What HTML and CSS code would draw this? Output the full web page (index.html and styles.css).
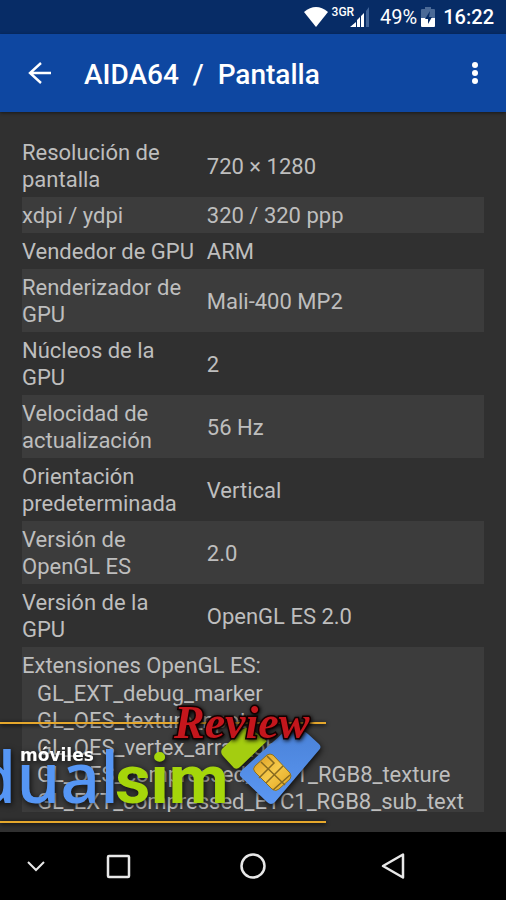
FILE: index.html
```html
<!DOCTYPE html>
<html lang="es">
<head>
    <meta charset="UTF-8">
    <meta name="viewport" content="width=device-width, initial-scale=1">
    <title>AIDA64 / Pantalla</title>
    <link rel="stylesheet" href="styles.css">
</head>
<body>
    <div class="status-bar">
        <svg class="wifi" width="24" height="20" viewBox="0 0 24 20" aria-hidden="true">
            <path d="M0 5Q12-5 24 5L12 20Z" fill="#fff"/>
        </svg>
        <span class="network">3GR</span>
        <svg class="signal" width="20" height="20" viewBox="0 0 20 20" aria-hidden="true">
            <path d="M0 20L6 15V20ZM7 13L10 10V20H7ZM11 9L14 6V20H11Z" fill="#fff"/>
            <path d="M16 4L19 0V20H16Z" fill="#3f6398"/>
        </svg>
        <span class="percent">49%</span>
        <svg class="battery" width="14" height="20" viewBox="0 0 14 20" aria-hidden="true">
            <path d="M4 0H10V2H13Q14 2 14 3V11H0V3Q0 2 1 2H4Z" fill="#4b6a97"/>
            <path d="M0 11H14V19Q14 20 13 20H1Q0 20 0 19Z" fill="#fff"/>
            <path d="M9 4L4 12H7V17L11 10H8Z" fill="#072c66"/>
        </svg>
        <span class="clock">16:22</span>
    </div>

    <header class="app-bar">
        <button class="icon-button" aria-label="Atrás">
            <svg width="24" height="24" viewBox="0 0 24 24">
                <path d="M13 2L2 12L13 22M2 12H23" fill="none" stroke="#fff" stroke-width="2.4"/>
            </svg>
        </button>
        <h1 class="title">AIDA64  /  Pantalla</h1>
        <button class="icon-button" aria-label="Más opciones">
            <svg width="24" height="24" viewBox="0 0 24 24">
                <g fill="#fff">
                    <circle cx="12" cy="4" r="3"/>
                    <circle cx="12" cy="12" r="3"/>
                    <circle cx="12" cy="20" r="3"/>
                </g>
            </svg>
        </button>
    </header>

    <main class="content">
        <div class="scroll">
            <table class="info">
                <tbody>
                    <tr><th scope="row">Resolución de pantalla</th><td>720 × 1280</td></tr>
                    <tr><th scope="row">xdpi / ydpi</th><td>320 / 320 ppp</td></tr>
                    <tr><th scope="row">Vendedor de GPU</th><td>ARM</td></tr>
                    <tr><th scope="row">Renderizador de GPU</th><td>Mali-400 MP2</td></tr>
                    <tr><th scope="row">Núcleos de la GPU</th><td>2</td></tr>
                    <tr><th scope="row">Velocidad de actualización</th><td>56 Hz</td></tr>
                    <tr><th scope="row">Orientación predeterminada</th><td>Vertical</td></tr>
                    <tr><th scope="row">Versión de OpenGL ES</th><td>2.0</td></tr>
                    <tr><th scope="row">Versión de la<br>GPU</th><td>OpenGL ES 2.0</td></tr>
                    <tr>
                        <td colspan="2">
                            Extensiones OpenGL ES:
                            <ul class="extensions">
                                <li>GL_EXT_debug_marker</li>
                                <li>GL_OES_texture_npot</li>
                                <li>GL_OES_vertex_array_object</li>
                                <li>GL_OES_compressed_ETC1_RGB8_texture</li>
                                <li>GL_EXT_compressed_ETC1_RGB8_sub_text</li>
                            </ul>
                        </td>
                    </tr>
                </tbody>
            </table>
        </div>

        <!-- site watermark -->
        <svg class="watermark" width="340" height="140" viewBox="0 0 340 140" role="img" aria-label="móviles dualsim Review">
            <defs>
                <linearGradient id="gold" x1="0" y1="0" x2="1" y2="1">
                    <stop offset="0" stop-color="#d9971c"/>
                    <stop offset="0.5" stop-color="#f6c94a"/>
                    <stop offset="1" stop-color="#e0a41f"/>
                </linearGradient>
                <linearGradient id="blue" x1="0" y1="0" x2="0" y2="1">
                    <stop offset="0" stop-color="#4a82d8"/>
                    <stop offset="1" stop-color="#5b97f2"/>
                </linearGradient>
            </defs>
            <path class="rule" d="M0 31H326M0 130H326"/>
            <g class="shadowed">
                <text class="dual" x="-27" y="111">dual</text>
                <text class="sim" x="115" y="111">sim</text>
                <text class="moviles" x="20" y="69">móviles</text>
            </g>
            <g class="shadowed">
                <path d="M222 57Q220 61 223 64L234 76Q237 78 240 75L267 49L250 36Q246 35 243 37Z" fill="#a4cd10"/>
                <path d="M242 78L284 40Q286 38 289 38L303 39Q306 40 308 42L319 52Q322 55 319 58L275 110Q271 114 267 110L241 85Q238 82 242 78Z" fill="url(#blue)"/>
                <path d="M255 74L267 63Q270 61 273 63L290 81Q292 84 290 87L279 97Q276 100 272 97L255 80Q252 77 255 74Z" fill="url(#gold)" stroke="#8d701f"/>
                <path d="M261 70L285 93M267 64L274 71L259 86M283 74L266 91M290 83L273 98" fill="none" stroke="#876a20" stroke-width="1.500"/>
            </g>
            <text class="review" x="174" y="46">Review</text>
        </svg>
    </main>

    <nav class="nav-bar">
        <button class="nav-button hide" aria-label="Ocultar">
            <svg width="18" height="12" viewBox="0 0 18 12">
                <path d="M1 2L9 10L17 2" fill="none" stroke="#e8e8e8" stroke-width="2"/>
            </svg>
        </button>
        <button class="nav-button" aria-label="Recientes">
            <svg width="28" height="28" viewBox="0 0 28 28">
                <rect x="4" y="4" width="21" height="21" rx="1" fill="none" stroke="#e8e8e8" stroke-width="2.500"/>
            </svg>
        </button>
        <button class="nav-button" aria-label="Inicio">
            <svg width="28" height="28" viewBox="0 0 28 28">
                <circle cx="14" cy="14" r="11.500" fill="none" stroke="#e8e8e8" stroke-width="2.500"/>
            </svg>
        </button>
        <button class="nav-button" aria-label="Volver">
            <svg width="36" height="28" viewBox="0 0 36 28">
                <path d="M13 14L33 2.500V25.500Z" fill="none" stroke="#e8e8e8" stroke-width="2.500" stroke-linejoin="round"/>
            </svg>
        </button>
    </nav>
</body>
</html>
```

FILE: styles.css
```css
* {
    box-sizing: border-box;
}

body {
    margin: 0;
    height: 100vh;
    display: flex;
    flex-direction: column;
    font-family: Roboto, "Noto Sans", sans-serif;
    font-size: 22px;
    line-height: 27px;
    color: #bebebe;
    background-color: #303030;
}

button {
    display: flex;
    align-items: center;
    justify-content: center;
    padding: 0;
    border: none;
    background: none;
    cursor: pointer;
}

.status-bar {
    flex: none;
    display: flex;
    align-items: center;
    justify-content: flex-end;
    height: 34px;
    padding: 0 12px;
    background-color: #072c66;
    color: #fff;
    font-size: 20px;
}

.network {
    align-self: flex-start;
    margin-left: 4px;
    font-size: 12px;
    line-height: 24px;
    font-weight: 500;
}

.signal {
    margin-left: -4px;
}

.percent {
    margin-left: 10px;
}

.battery {
    margin-left: 4px;
}

.clock {
    margin-left: 8px;
    font-weight: 500;
}

.app-bar {
    flex: none;
    display: flex;
    align-items: center;
    height: 78px;
    padding: 0 7px 0 16px;
    background-color: #0e47a1;
    box-shadow: 0 1px 3px rgba(0, 0, 0, 0.5);
}

.icon-button {
    width: 48px;
    height: 48px;
}

.title {
    flex: 1;
    margin: 0 0 0 20px;
    padding-top: 4px;
    color: #fff;
    font-size: 28px;
    line-height: 32px;
    font-weight: 500;
    white-space: pre;
}

.content {
    flex: 1;
    min-height: 0;
    position: relative;
    padding: 22px 22px 20px;
    overflow: hidden;
}

.scroll {
    height: 100%;
    overflow-y: auto;
    scrollbar-width: none;
}

.info {
    width: 100%;
    table-layout: fixed;
    border-collapse: collapse;
}

.info td {
    padding: 5px 0 4px;
}

.info th {
    width: 40%;
    padding: 5px 8px 4px 0;
    font-weight: normal;
    text-align: left;
}

.info tr:nth-child(even) {
    background-color: #3c3c3c;
}

.extensions {
    margin: 1px 0 0;
    padding: 0 0 0 15px;
    list-style: none;
}

/* lies over the list, bottom left */
.watermark {
    position: absolute;
    left: 0;
    bottom: 0;
}

.rule {
    stroke: #e5a72c;
    stroke-width: 2;
    filter: drop-shadow(0 1px 2px #000);
}

.shadowed {
    filter: drop-shadow(1px 2px 3px rgba(0, 0, 0, 0.8));
}

.dual {
    font: 500 70px "Noto Sans", sans-serif;
    fill: #5596f5;
}

.sim {
    font: bold 69px Roboto, sans-serif;
    fill: #a5d60a;
}

.moviles {
    font: bold 17px "DejaVu Sans", sans-serif;
    fill: #fff;
}

.review {
    font: italic bold 46px "Liberation Serif", serif;
    fill: #c4161c;
    stroke: #140000;
    stroke-width: 3px;
    paint-order: stroke;
    filter: drop-shadow(1px 1px 2px #000);
}

.nav-bar {
    flex: none;
    display: grid;
    grid-template-columns: 51px 1fr 1fr 1fr 51px;
    height: 68px;
    background-color: #000;
}

.hide {
    padding-left: 20px;
}
```
